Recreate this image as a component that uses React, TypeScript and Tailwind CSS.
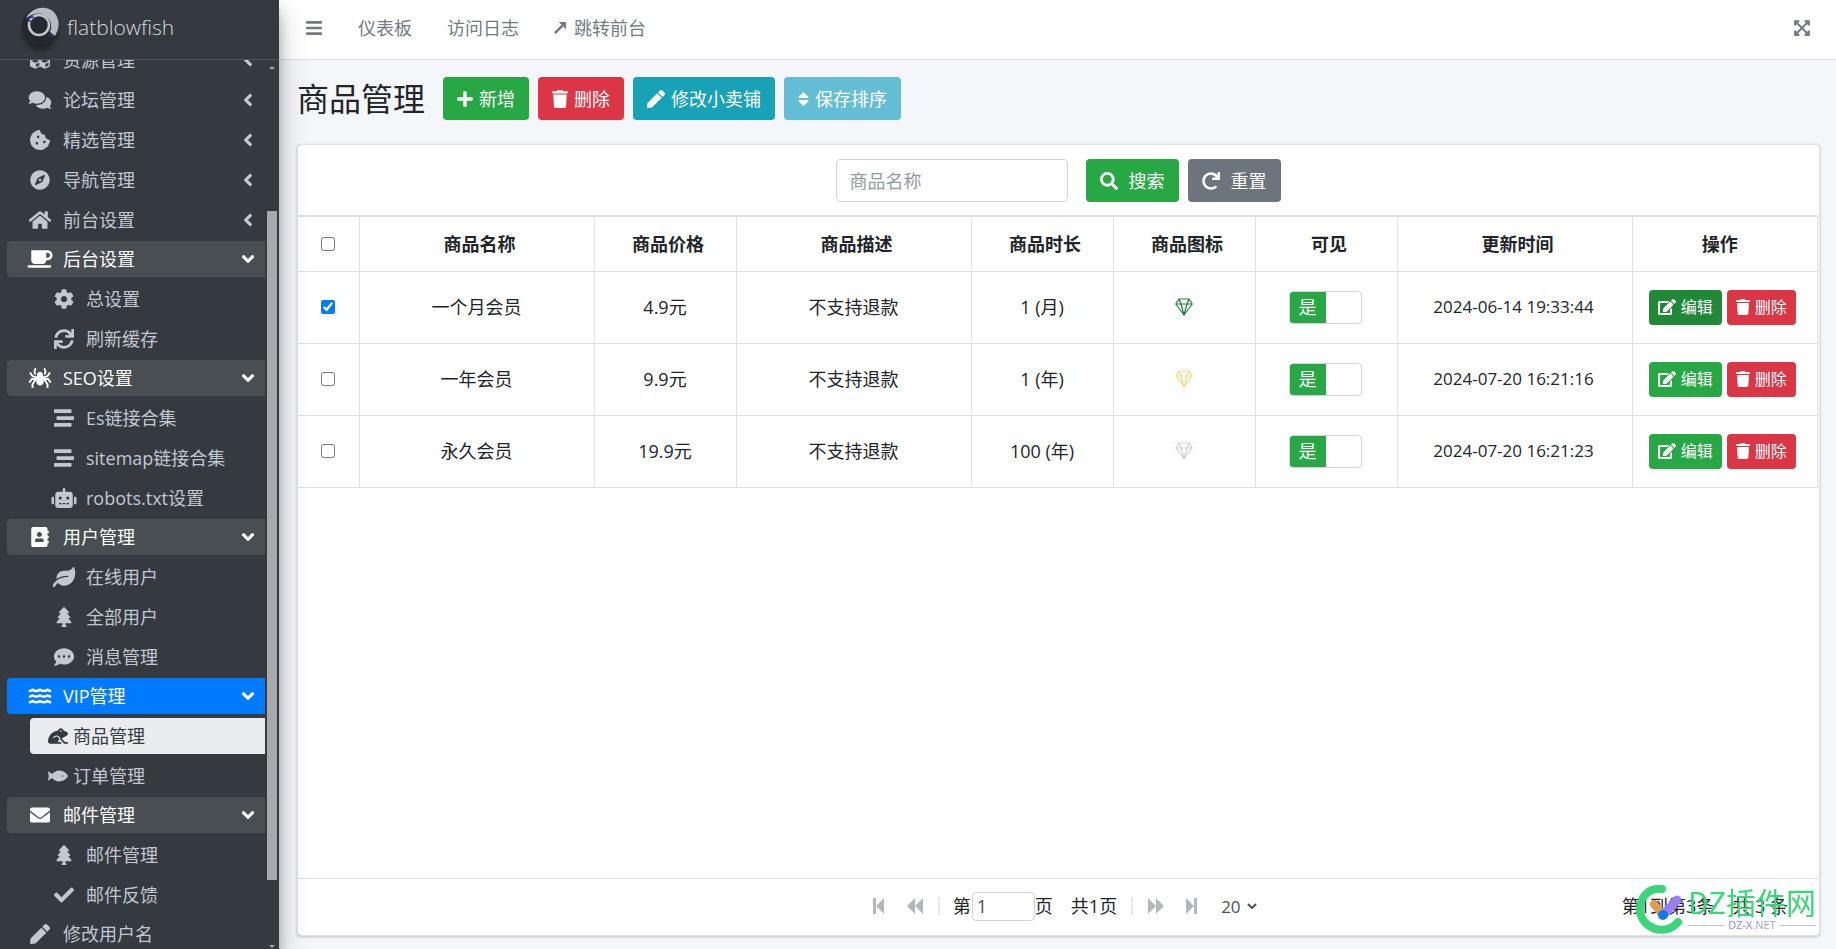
import { useState } from 'react';
import type { ReactNode } from 'react';
import type { IconType } from 'react-icons';
import {
  FaAddressBook,
  FaAngleLeft,
  FaBars,
  FaCheck,
  FaCoffee,
  FaCog,
  FaCommentDots,
  FaComments,
  FaCompass,
  FaCookieBite,
  FaCubes,
  FaEdit,
  FaEnvelope,
  FaExpandArrowsAlt,
  FaFish,
  FaFrog,
  FaHome,
  FaLeaf,
  FaPen,
  FaPlus,
  FaRedo,
  FaRobot,
  FaSearch,
  FaSort,
  FaSpider,
  FaStream,
  FaSync,
  FaTrash,
  FaTree,
  FaWater,
} from 'react-icons/fa';

type MenuItem = {
  label: string;
  icon: IconType;
  compact?: boolean;
  selected?: boolean;
};

type MenuSection = MenuItem & { active?: boolean; children: MenuItem[] };

const collapsedMenu: MenuItem[] = [
  { label: '资源管理', icon: FaCubes },
  { label: '论坛管理', icon: FaComments },
  { label: '精选管理', icon: FaCookieBite },
  { label: '导航管理', icon: FaCompass },
  { label: '前台设置', icon: FaHome },
];

const openMenu: MenuSection[] = [
  {
    label: '后台设置',
    icon: FaCoffee,
    children: [
      { label: '总设置', icon: FaCog },
      { label: '刷新缓存', icon: FaSync },
    ],
  },
  {
    label: 'SEO设置',
    icon: FaSpider,
    children: [
      { label: 'Es链接合集', icon: FaStream },
      { label: 'sitemap链接合集', icon: FaStream },
      { label: 'robots.txt设置', icon: FaRobot },
    ],
  },
  {
    label: '用户管理',
    icon: FaAddressBook,
    children: [
      { label: '在线用户', icon: FaLeaf },
      { label: '全部用户', icon: FaTree },
      { label: '消息管理', icon: FaCommentDots },
    ],
  },
  {
    label: 'VIP管理',
    icon: FaWater,
    active: true,
    children: [
      { label: '商品管理', icon: FaFrog, compact: true, selected: true },
      { label: '订单管理', icon: FaFish, compact: true },
    ],
  },
  {
    label: '邮件管理',
    icon: FaEnvelope,
    children: [
      { label: '邮件管理', icon: FaTree },
      { label: '邮件反馈', icon: FaCheck },
    ],
  },
];

const products = [
  { id: 1, name: '一个月会员', price: '4.9元', desc: '不支持退款', duration: '1 (月)', gem: 'text-[#1e7e34]', time: '2024-06-14 19:33:44' },
  { id: 2, name: '一年会员', price: '9.9元', desc: '不支持退款', duration: '1 (年)', gem: 'text-[#ffd88a]', time: '2024-07-20 16:21:16' },
  { id: 3, name: '永久会员', price: '19.9元', desc: '不支持退款', duration: '100 (年)', gem: 'text-[#d0d2d6]', time: '2024-07-20 16:21:23' },
];

const columns = ['商品名称', '商品价格', '商品描述', '商品时长', '商品图标', '可见', '更新时间', '操作'];

function BrandLogo() {
  return (
    <svg viewBox="0 0 42 48" className="h-12 w-[42px]" aria-hidden="true">
      <defs>
        <radialGradient id="brand-shade">
          <stop offset="0.6" stopColor="#212529" />
          <stop offset="1" stopColor="#212529" stopOpacity="0" />
        </radialGradient>
      </defs>
      <circle cx="20" cy="27" r="22" fill="url(#brand-shade)" />
      <circle cx="20" cy="20" r="18" fill="#22282c" />
      <path d="M6 12C13-1 30-1 36 9c4 7 3 14-1 21l-5-4c3-8 0-14-6-17-5-3-12-1-18 3z" fill="#b4bdc6" />
      <circle cx="19" cy="19" r="10" fill="#24292e" stroke="#c3c7cb" strokeWidth="2.6" />
      <path d="M7 12l7-1m-6 3 4 2M29 29l4 1" stroke="#2c3890" strokeWidth="1.4" />
    </svg>
  );
}

function GemIcon({ className }: { className: string }) {
  return (
    <svg
      viewBox="0 0 18 18"
      className={`mx-auto size-[18px] ${className}`}
      fill="none"
      stroke="currentColor"
      strokeWidth="1.2"
      strokeLinejoin="round"
      aria-hidden="true"
    >
      <path d="M4 1h10l3.2 5L9 17 .8 6z" />
      <path d="M.8 6h16.4M4 1l2 5 3 11 3-11 2-5" />
    </svg>
  );
}

function SidebarLink({ item, nested }: { item: MenuItem; nested?: boolean }) {
  const Icon = item.icon;
  if (item.compact) {
    return (
      <a
        href="#"
        className={`ml-[23px] flex h-9 items-center gap-[5px] rounded-l pl-[18px] ${
          item.selected ? 'bg-[#ebecee] text-[#343a40]' : ''
        }`}
      >
        <Icon className="h-[18px] w-5" />
        {item.label}
      </a>
    );
  }
  return (
    <a href="#" className={`flex h-9 items-center ${nested ? 'gap-2 pl-[43px]' : 'gap-[9px] pl-[19px]'}`}>
      <Icon className="h-5 w-7" />
      {item.label}
      {!nested && <FaAngleLeft className="mr-3 ml-auto h-5 w-[10px]" />}
    </a>
  );
}

function Sidebar() {
  return (
    <aside className="relative z-10 flex w-[279px] shrink-0 flex-col bg-[#343a40] text-[#c2c7d0] shadow-[0_14px_28px_rgba(0,0,0,0.25),0_10px_10px_rgba(0,0,0,0.22)]">
      <a href="#" className="flex h-[60px] shrink-0 items-center gap-[5px] border-b border-[#4b545c] pl-5">
        <BrandLogo />
        <span className="pb-[5px] text-[21px] leading-8 font-light text-[#d6d8d9]">flatblowfish</span>
      </a>
      <div className="flex min-h-0 flex-1 pr-[2px]">
        <nav className="flex min-w-0 flex-1 flex-col gap-[3px] overflow-hidden pr-[2px] pl-[7px]">
          <ul className="-mt-[18px] flex shrink-0 flex-col gap-1">
            {collapsedMenu.map((item) => (
              <li key={item.label}>
                <SidebarLink item={item} />
              </li>
            ))}
          </ul>
          {openMenu.map((section) => (
            <div key={section.label} className="flex shrink-0 flex-col gap-1">
              <a
                href="#"
                className={`flex h-9 items-center gap-[9px] rounded-l pl-[19px] text-white ${
                  section.active ? 'bg-[#007bff]' : 'bg-[#494e53]'
                }`}
              >
                <section.icon className="h-5 w-7" />
                {section.label}
                <FaAngleLeft className="mr-3 ml-auto h-5 w-[10px] -rotate-90" />
              </a>
              <ul className="flex flex-col gap-1">
                {section.children.map((item) => (
                  <li key={item.label}>
                    <SidebarLink item={item} nested />
                  </li>
                ))}
              </ul>
            </div>
          ))}
          <a href="#" className="flex h-9 shrink-0 items-center gap-[9px] pl-[19px]">
            <FaPen className="h-5 w-7" />
            修改用户名
          </a>
        </nav>
        {/* scroll bar */}
        <div className="flex w-[10px] flex-col items-center justify-between pt-[6px] pb-px">
          <span className="border-x-[3px] border-b-[3px] border-x-transparent border-b-[#a9a9a9]" />
          <span className="mt-[76px] h-[669px] w-full bg-[#a9a9a9]" />
          <span className="border-x-[3px] border-t-[3px] border-x-transparent border-t-[#a9a9a9]" />
        </div>
      </div>
    </aside>
  );
}

function Button({ className, children }: { className: string; children: ReactNode }) {
  return (
    <button type="button" className={`flex h-[43px] items-center rounded px-[14px] text-white ${className}`}>
      {children}
    </button>
  );
}

function TopBar() {
  return (
    <header className="flex h-[60px] shrink-0 items-center border-b border-[#dee2e6] bg-white pr-[26px] pb-1 pl-[27px] text-[#747a7f]">
      <button type="button" aria-label="菜单">
        <FaBars className="h-[18px] w-4" />
      </button>
      <nav className="flex items-center gap-[35px] pl-9">
        <a href="#">仪表板</a>
        <a href="#">访问日志</a>
        <a href="#" className="flex items-center gap-[7px]">
          <svg viewBox="0 0 14 14" className="size-[13px]" aria-hidden="true">
            <path d="M1 13 9 5" stroke="currentColor" strokeWidth="2.8" fill="none" />
            <path d="M5 1h8v8z" fill="currentColor" />
          </svg>
          跳转前台
        </a>
      </nav>
      <button type="button" aria-label="全屏" className="ml-auto">
        <FaExpandArrowsAlt className="h-[18px] w-4" />
      </button>
    </header>
  );
}

function StepIcon({ flip }: { flip?: boolean }) {
  return (
    <svg viewBox="0 0 11 16" className={`h-4 w-[11px] ${flip ? 'rotate-180' : ''}`} fill="currentColor" aria-hidden="true">
      <path d="M0 0h3v16H0zM11 0v16L3 8z" />
    </svg>
  );
}

function SeekIcon({ flip }: { flip?: boolean }) {
  return (
    <svg viewBox="0 0 16 16" className={`size-4 ${flip ? 'rotate-180' : ''}`} fill="currentColor" aria-hidden="true">
      <path d="M8 0v16L0 8zM16 0v16L8 8z" />
    </svg>
  );
}

function Pager() {
  return (
    <div className="grid h-[57px] shrink-0 grid-cols-[1fr_auto_1fr] items-center border-t border-[#dee2e6] pb-[2px]">
      <div className="col-start-2 flex items-center pl-[14px]">
        <button type="button" aria-label="首页" className="text-[#b4b8be]">
          <StepIcon />
        </button>
        <button type="button" aria-label="上一页" className="ml-[23px] text-[#b4b8be]">
          <SeekIcon />
        </button>
        <span className="mr-[13px] ml-[15px] h-[18px] w-[2px] bg-[#e9e9e9]" />
        <label htmlFor="page">第</label>
        <input
          id="page"
          defaultValue="1"
          className="ml-px h-[29px] w-[63px] rounded border border-[#ced4da] bg-white px-1 text-[#495057]"
        />
        <span>页</span>
        <span className="ml-[18px]">共1页</span>
        <span className="mr-[15px] ml-[14px] h-[18px] w-[2px] bg-[#e9e9e9]" />
        <button type="button" aria-label="下一页" className="text-[#b4b8be]">
          <SeekIcon flip />
        </button>
        <button type="button" aria-label="尾页" className="ml-[22px] text-[#b4b8be]">
          <StepIcon flip />
        </button>
        <div className="relative ml-6">
          <select aria-label="每页条数" defaultValue="20" className="w-9 appearance-none bg-transparent text-[17px] text-[#495057]">
            <option>20</option>
            <option>50</option>
          </select>
          <svg viewBox="0 0 10 6" className="pointer-events-none absolute top-1/2 right-0 h-[6px] w-[10px] -translate-y-1/2" aria-hidden="true">
            <path d="M1 1l4 4 4-4" fill="none" stroke="#495057" strokeWidth="2" />
          </svg>
        </div>
      </div>
      <div className="flex justify-end gap-[18px] pr-[30px]">
        <span>第1到第3条</span>
        <span>共 3 条</span>
      </div>
    </div>
  );
}

function Watermark() {
  return (
    <div className="pointer-events-none fixed right-5 bottom-[14px] z-20 flex items-center gap-1">
      <svg viewBox="0 0 48 52" className="h-[52px] w-12" fill="none" strokeLinecap="round" aria-hidden="true">
        <path d="M26 6C13 4 4 14 4 26c0 20 26 28 38 13" stroke="#3bd67a" strokeWidth="8" />
        <path d="M18 21 26 31" stroke="#de9c4c" strokeWidth="8" />
        <path d="M29 30 41 17" stroke="#9b7df8" strokeWidth="9" />
        <circle cx="27" cy="32" r="5" fill="#087cf5" />
      </svg>
      <div className="flex flex-col pb-1">
        <span className="font-['Noto_Sans_CJK_SC',sans-serif] text-[30px] leading-9 text-[#3bd67a]">DZ插件网</span>
        <span className="flex items-center gap-[3px] text-[11px] leading-3 text-[#a7a3c4]">
          <span className="h-px flex-1 bg-[#c4c6ca]" />
          <span>
            <span className="text-[#9b7df8]">DZ-X</span>.NET
          </span>
          <span className="h-px flex-1 bg-[#c4c6ca]" />
        </span>
      </div>
    </div>
  );
}

export default function App() {
  const [checked, setChecked] = useState<number[]>([1]);

  const toggle = (id: number) => {
    setChecked((prev) => (prev.includes(id) ? prev.filter((x) => x !== id) : [...prev, id]));
  };

  return (
    <div className="flex h-screen bg-[#f4f6f9] font-['Open_Sans','Noto_Sans_CJK_SC',sans-serif] text-lg leading-7 text-[#212529]">
      <Sidebar />

      <div className="flex min-w-0 flex-1 flex-col">
        <TopBar />

        <main className="flex min-h-0 flex-1 flex-col pr-4 pb-[13px] pl-[18px]">
          <div className="flex items-center gap-[9px] pt-[17px] pb-6">
            <h1 className="mr-[9px] text-[32px] leading-[43px]">商品管理</h1>
            <Button className="gap-[6px] bg-[#28a745]">
              <FaPlus className="h-[18px] w-4" />
              新增
            </Button>
            <Button className="gap-[6px] bg-[#dc3545]">
              <FaTrash className="h-[18px] w-4" />
              删除
            </Button>
            <Button className="gap-[6px] bg-[#17a2b8]">
              <FaPen className="size-[18px]" />
              修改小卖铺
            </Button>
            <Button className="gap-[6px] bg-[#63bdd4]">
              <FaSort className="h-[18px] w-[11px]" />
              保存排序
            </Button>
          </div>

          <section className="flex min-h-0 flex-1 flex-col rounded border border-[#e1e3e6] bg-white pr-px shadow-[0_0_1px_rgba(0,0,0,0.13),0_1px_3px_rgba(0,0,0,0.2)]">
            <form className="flex shrink-0 items-center justify-center gap-[9px] pt-[14px] pb-[13px]">
              <input
                type="text"
                aria-label="商品名称"
                placeholder="商品名称"
                className="mr-[9px] h-[43px] w-[232px] rounded border border-[#ced4da] px-[13px] placeholder:text-[#939ba2]"
              />
              <Button className="gap-[11px] bg-[#28a745]">
                <FaSearch className="size-[18px]" />
                搜索
              </Button>
              <Button className="gap-[11px] bg-[#6c757d]">
                <FaRedo className="size-[18px]" />
                重置
              </Button>
            </form>

            <table className="w-full table-fixed border-collapse border-t-2 border-r border-b border-[#dee2e6] text-center">
              <colgroup>
                <col className="w-[61px]" />
                <col className="w-[235px]" />
                <col className="w-[142px]" />
                <col className="w-[235px]" />
                <col className="w-[142px]" />
                <col className="w-[142px]" />
                <col className="w-[142px]" />
                <col className="w-[235px]" />
                <col />
              </colgroup>
              <thead>
                <tr className="h-[55px]">
                  <th className="border-r border-b border-[#dee2e6]">
                    <input type="checkbox" aria-label="全选" className="mx-auto block size-[14px] accent-[#007bff]" />
                  </th>
                  {columns.map((title) => (
                    <th key={title} className="border-r border-b border-[#dee2e6] pl-[6px] font-bold last:pr-[10px] last:pl-0">
                      {title}
                    </th>
                  ))}
                </tr>
              </thead>
              <tbody>
                {products.map((p, i) => (
                  <tr key={p.id} className="h-[72px] *:border-r *:border-b *:border-[#dee2e6]">
                    <td>
                      <input
                        type="checkbox"
                        aria-label={p.name}
                        checked={checked.includes(p.id)}
                        onChange={() => toggle(p.id)}
                        className="mx-auto block size-[14px] accent-[#007bff]"
                      />
                    </td>
                    <td>{p.name}</td>
                    <td>{p.price}</td>
                    <td>{p.desc}</td>
                    <td>{p.duration}</td>
                    <td>
                      <GemIcon className={p.gem} />
                    </td>
                    <td className="pr-[2px]">
                      <label className="mx-auto flex h-[33px] w-[73px] cursor-pointer overflow-hidden rounded border border-[#ced4da] bg-white">
                        <input type="checkbox" defaultChecked className="sr-only" />
                        <span className="flex w-9 items-center justify-center bg-[#28a745] text-white">是</span>
                      </label>
                    </td>
                    <td className="pr-[2px] text-[17px]">{p.time}</td>
                    <td>
                      <div className="flex justify-center gap-[5px] pr-[5px] text-base text-white">
                        <button
                          type="button"
                          className={`flex h-[35px] items-center gap-[5px] rounded px-[9px] ${i === 0 ? 'bg-[#218838]' : 'bg-[#28a745]'}`}
                        >
                          <FaEdit className="h-4 w-[18px]" />
                          编辑
                        </button>
                        <button type="button" className="flex h-[35px] items-center gap-[5px] rounded bg-[#dc3545] px-[9px]">
                          <FaTrash className="h-4 w-[14px]" />
                          删除
                        </button>
                      </div>
                    </td>
                  </tr>
                ))}
              </tbody>
            </table>

            <div className="flex-1" />
            <Pager />
          </section>
        </main>
      </div>

      <Watermark />
    </div>
  );
}
